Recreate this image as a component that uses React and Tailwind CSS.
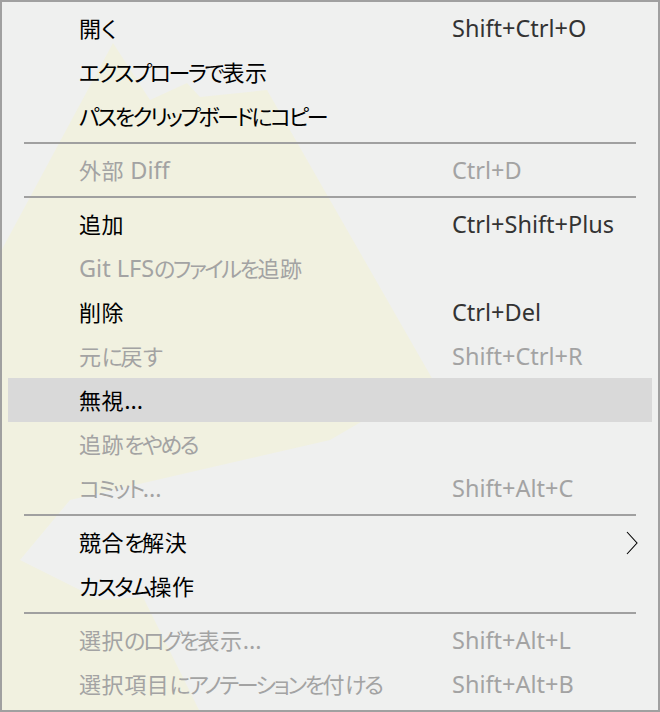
const items = [
  { label: '開く', shortcut: 'Shift+Ctrl+O' },
  { label: 'エクスプローラで表示' },
  { label: 'パスをクリップボードにコピー' },
  { sep: true },
  { label: '外部 Diff', shortcut: 'Ctrl+D', disabled: true },
  { sep: true },
  { label: '追加', shortcut: 'Ctrl+Shift+Plus' },
  { label: 'Git LFSのファイルを追跡', disabled: true },
  { label: '削除', shortcut: 'Ctrl+Del' },
  { label: '元に戻す', shortcut: 'Shift+Ctrl+R', disabled: true },
  { label: '無視...', active: true },
  { label: '追跡をやめる', disabled: true },
  { label: 'コミット...', shortcut: 'Shift+Alt+C', disabled: true },
  { sep: true },
  { label: '競合を解決', submenu: true },
  { label: 'カスタム操作' },
  { sep: true },
  { label: '選択のログを表示...', shortcut: 'Shift+Alt+L', disabled: true },
  { label: '選択項目にアノテーションを付ける', shortcut: 'Shift+Alt+B', disabled: true },
];

// kana in the reference font are narrow, kanji are full width
const renderLabel = (text) =>
  text
    .split(/([\u3040-\u30ff]+|[\u3400-\u9fff]+)/)
    .filter(Boolean)
    .map((part, i) => {
      if (/[\u3040-\u30ff]/.test(part)) {
        return <span key={i} className="text-[22px] tracking-[-2.4px]">{part}</span>;
      }
      if (/[\u3400-\u9fff]/.test(part)) {
        return <span key={i} className="text-[22px] tracking-[0.6px]">{part}</span>;
      }
      return <span key={i}>{part}</span>;
    });

const Mountains = () => (
  <svg className="absolute inset-0 pointer-events-none" width="656" height="708" viewBox="2 2 656 708">
    <polygon
      fill="#f1f1e0"
      points="0,253 113,43 150,100 187,83 200,97 267,90 433,380 330,440 70,500 20,560 100,600 143,597 200,712 0,712"
    />
  </svg>
);

const Chevron = () => (
  <svg width="12" height="24" viewBox="0 0 12 24" fill="none" stroke="#000" strokeWidth="1.1">
    <path d="M1 1 L11 12 L1 23" />
  </svg>
);

const MenuRow = ({ item }) => {
  const color = item.disabled ? 'text-[#a3a3a3]' : 'text-black';
  const shortcutColor = item.disabled ? 'text-[#a3a3a3]' : 'text-[#333333]';
  return (
    <div className={`relative flex h-11 items-center pl-[71px] pr-[14px] pt-[2px] ${item.active ? 'bg-[#d9d9d9]' : ''}`}>
      <span className={`w-[373px] shrink-0 whitespace-nowrap ${color}`}>{renderLabel(item.label)}</span>
      {item.shortcut && (
        <span className={`whitespace-nowrap text-[23.5px] ${shortcutColor}`}>{item.shortcut}</span>
      )}
      {item.submenu && (
        <span className="ml-auto flex items-center">
          <Chevron />
        </span>
      )}
    </div>
  );
};

export default function App() {
  return (
    <div className="relative w-[660px] h-[712px] overflow-hidden border-2 border-[#a0a0a0] bg-[#eff0ef] font-['Noto_Sans','Noto_Sans_CJK_JP',sans-serif] text-[23.5px] leading-none [font-feature-settings:'palt']">
      <Mountains />
      <div className="relative flex flex-col px-1.5 py-1">
        {items.map((item, i) =>
          item.sep ? (
            <div key={i} className="flex h-[10px] items-center px-4">
              <div className="h-[2px] w-full bg-[#a0a0a0]"></div>
            </div>
          ) : (
            <MenuRow key={i} item={item} />
          )
        )}
      </div>
    </div>
  );
}
